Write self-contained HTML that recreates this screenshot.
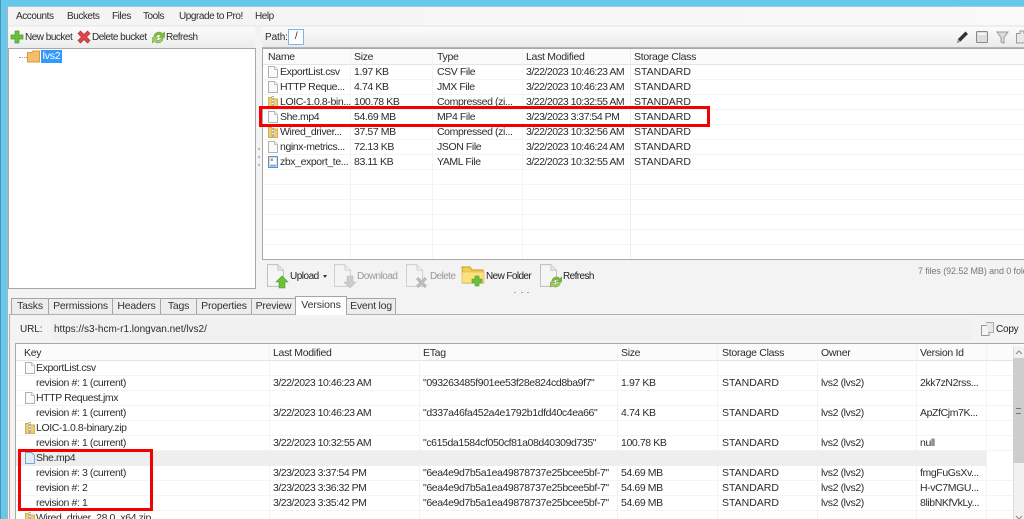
<!DOCTYPE html>
<html><head><meta charset="utf-8"><style>
html,body{margin:0;padding:0;background:#fff}
#p{position:relative;width:1024px;height:519px;overflow:hidden;background:#f3f3f3;font:10px "Liberation Sans",sans-serif;letter-spacing:-.5px;color:#2c2c2c;filter:blur(.3px)}
#p div,#p span,#p svg{position:absolute}
.t{white-space:nowrap;line-height:14px}
.b{background:#fff;border:1px solid #a8a8a8;box-sizing:border-box}
.r{left:0;right:0;height:15px;border-bottom:1px solid #f4f4f4;box-sizing:border-box;font-size:10.5px;letter-spacing:-.4px}
.r span{white-space:nowrap;line-height:15px;top:0}
.v{top:0;width:1px;background:#f3f3f3}
.a span:nth-child(1){left:17px}.a span:nth-child(2){left:91px}.a span:nth-child(3){left:174px}.a span:nth-child(4){left:263px;letter-spacing:-.5px}.a span:nth-child(5){left:371px;letter-spacing:0}
.a svg{left:5px;top:1px}
.k span:nth-child(1){left:20px}.k span:nth-child(2){left:257px;letter-spacing:-.5px}.k span:nth-child(3){left:407px}.k span:nth-child(4){left:605px}.k span:nth-child(5){left:706px;letter-spacing:0}.k span:nth-child(6){left:805px}.k span:nth-child(7){left:904px}
.k svg{left:9px;top:1px}
.h span{letter-spacing:-.3px!important}
.tab{top:298px;height:16px;background:#ededed;border:1px solid #a5a5a5;border-bottom:0;box-sizing:border-box;line-height:15px;text-align:center;color:#333;font-size:10.5px;letter-spacing:-.22px}
.red{border:3px solid #f40000;box-sizing:border-box}
.m{top:10px;letter-spacing:-.45px}
</style></head><body><div id="p">
<svg width="0" height="0" style="position:absolute"><defs>
<symbol id="f" viewBox="0 0 10 12"><path d="M.5.5H6.500L9.500 3.500V11.500H.5Z" fill="#fafafa" stroke="#b0b0b0"/><path d="M6.500.5V3.500H9.500" fill="#eee" stroke="#c4c4c4"/></symbol>
<symbol id="fb" viewBox="0 0 10 12"><path d="M.5.5H6.500L9.500 3.500V11.500H.5Z" fill="#e0ecf8" stroke="#7fa6cc"/></symbol>
<symbol id="z" viewBox="0 0 10 12"><path d="M.5 1.500H3.500L4.500 3H9.500V11.500H.5Z" fill="#f0cf72" stroke="#d0ae55"/><rect x="3.500" y="0" width="2.500" height="12" fill="#b8b090"/><rect x="4" y="1" width="1.500" height="1" fill="#fff"/><rect x="4" y="4" width="1.500" height="1" fill="#fff"/><rect x="4" y="7" width="1.500" height="1" fill="#fff"/></symbol>
<symbol id="y" viewBox="0 0 10 12"><path d="M.5.5H9.500V11.500H.5Z" fill="#cfe2f5" stroke="#5f8fc0"/><rect x="2" y="2" width="6" height="6" fill="#fff"/><rect x="2.500" y="2.500" width="2.500" height="2.500" fill="#e08a40"/><rect x="2" y="9" width="6" height="1.500" fill="#7fa8d0"/></symbol>
<symbol id="d" viewBox="0 0 18 24"><path d="M.5.5H11.500L17.500 6.500V23.500H.5Z" fill="#f5f5f5" stroke="#bdbdbd"/><path d="M11.500.5V6.500H17.500" fill="#e4e4e4" stroke="#c8c8c8"/></symbol>
<symbol id="gr" viewBox="0 0 16 16"><path d="M3 7A5.500 5.500 0 0 1 12.500 4L14.500 2V8H8.500L10.500 6A3 3 0 0 0 5.500 7Z" fill="#7dbb3c" stroke="#5a962a" stroke-width=".5"/><path d="M13 9A5.500 5.500 0 0 1 3.500 12L1.500 14V8H7.500L5.500 10A3 3 0 0 0 10.500 9Z" fill="#9ccf5c" stroke="#5a962a" stroke-width=".5"/></symbol>
</defs></svg>

<!-- window chrome -->
<div style="left:0;top:0;width:1024px;height:6px;background:#66c9ec"></div>
<div style="left:0;top:0;width:7px;height:519px;background:#66c9ec"></div>
<div style="left:0;top:0;width:1px;height:519px;background:#4a93b5"></div>
<div style="left:7px;top:6px;width:1017px;height:1px;background:#a9c7d6"></div>
<div style="left:7px;top:6px;width:1px;height:513px;background:#a8b4ba"></div>
<div style="left:8px;top:7px;width:1016px;height:18px;background:linear-gradient(90deg,#f3f3f3,#f9f9f9)"></div>
<div style="left:8px;top:25px;width:1016px;height:2px;background:#eee"></div>

<!-- menu -->
<span class="t m" style="left:16px">Accounts</span>
<span class="t m" style="left:67px">Buckets</span>
<span class="t m" style="left:112px">Files</span>
<span class="t m" style="left:143px">Tools</span>
<span class="t m" style="left:179px">Upgrade to Pro!</span>
<span class="t m" style="left:255px">Help</span>

<!-- left toolbar -->
<div style="left:9px;top:27px;width:246px;height:21px;background:linear-gradient(#fbfbfb,#ececec)"></div>
<svg style="left:10px;top:30px" width="14" height="14" viewBox="0 0 14 14"><path d="M5 1H9V5H13V9H9V13H5V9H1V5H5Z" fill="#6cbf3c" stroke="#4f9a2a" stroke-width=".7"/></svg>
<span class="t" style="left:25px;top:31px">New bucket</span>
<svg style="left:77px;top:30px" width="14" height="14" viewBox="0 0 14 14"><path d="M1 3.500L3.500 1L7 4.500L10.500 1L13 3.500L9.500 7L13 10.500L10.500 13L7 9.500L3.500 13L1 10.500L4.500 7Z" fill="#e0474c" stroke="#b52a30" stroke-width=".7"/></svg>
<span class="t" style="left:92px;top:31px">Delete bucket</span>
<svg style="left:151px;top:30px" width="15" height="15"><use href="#gr"/></svg>
<span class="t" style="left:166px;top:31px">Refresh</span>

<!-- tree -->
<div class="b" style="left:8px;top:48px;width:248px;height:241px"></div>
<div style="left:19px;top:57px;width:8px;height:0;border-top:1px dotted #999"></div>
<svg style="left:27px;top:50px" width="13" height="13" viewBox="0 0 13 13"><path d="M.5 2.500H5L6 1H12.500V12H.5Z" fill="#f6bd6a" stroke="#d99a45"/></svg>
<div style="left:41px;top:50px;width:21px;height:13px;background:#3399ff;color:#fff;line-height:13px;text-align:center;font-size:10.5px;letter-spacing:-.2px">lvs2</div>

<!-- splitter dots -->
<div style="left:258px;top:148px;width:2px;height:2px;background:#bbb"></div>
<div style="left:258px;top:156px;width:2px;height:2px;background:#bbb"></div>
<div style="left:258px;top:164px;width:2px;height:2px;background:#bbb"></div>

<!-- right toolbar -->
<div style="left:262px;top:27px;width:762px;height:21px;background:linear-gradient(#fbfbfb,#eaeaea)"></div>
<div style="left:262px;top:47px;width:762px;height:1px;background:#b5b5b5"></div>
<span class="t" style="left:265px;top:31px;letter-spacing:-.1px">Path:</span>
<div style="left:288px;top:29px;width:16px;height:16px;background:#fff;border:1px solid #7fb4e6;box-sizing:border-box;text-align:center;line-height:14px">/</div>
<svg style="left:956px;top:30px" width="13" height="14" viewBox="0 0 13 14"><path d="M1 13L2 9L9.500 1.500L12 4L4.500 11.500Z" fill="#333"/><path d="M1 13L2 9L4.500 11.500Z" fill="#999"/></svg>
<svg style="left:976px;top:31px" width="12" height="12" viewBox="0 0 12 12"><rect x=".5" y=".5" width="11" height="11" rx="1" fill="#ddd" stroke="#888"/><rect x="2" y="2" width="8" height="2" fill="#f5f5f5"/></svg>
<svg style="left:996px;top:31px" width="13" height="13" viewBox="0 0 13 13"><path d="M1 1H12L8 6.500V12L5 11V6.500Z" fill="#ddd" stroke="#999"/></svg>
<svg style="left:1016px;top:30px" width="12" height="14" viewBox="0 0 12 14"><path d="M.5 3.500H4V1H8V3.500H11.500V13H.5Z" fill="#e8e8e8" stroke="#999"/></svg>

<!-- file table -->
<div class="b" style="left:262px;top:48px;width:780px;height:212px;overflow:hidden">
  <div style="left:0;top:0;right:0;height:15px;background:#fbfbfb;border-bottom:1px solid #e4e4e4"></div>
  <div class="v" style="left:87px;height:210px"></div><div class="v" style="left:169px;height:210px"></div><div class="v" style="left:259px;height:210px"></div><div class="v" style="left:367px;height:210px;background:#ececec"></div>
  <div class="r a h" style="top:1px;border-bottom:0"><span style="left:5px">Name</span><span>Size</span><span>Type</span><span>Last Modified</span><span>Storage Class</span></div>
  <div class="r a" style="top:16px"><span>ExportList.csv</span><span>1.97 KB</span><span>CSV File</span><span>3/22/2023 10:46:23 AM</span><span>STANDARD</span><svg width="10" height="12"><use href="#f"/></svg></div>
  <div class="r a" style="top:31px"><span>HTTP Reque...</span><span>4.74 KB</span><span>JMX File</span><span>3/22/2023 10:46:23 AM</span><span>STANDARD</span><svg width="10" height="12"><use href="#f"/></svg></div>
  <div class="r a" style="top:46px"><span>LOIC-1.0.8-bin...</span><span>100.78 KB</span><span>Compressed (zi...</span><span>3/22/2023 10:32:55 AM</span><span>STANDARD</span><svg width="10" height="12"><use href="#z"/></svg></div>
  <div class="r a" style="top:61px"><span>She.mp4</span><span>54.69 MB</span><span>MP4 File</span><span>3/23/2023 3:37:54 PM</span><span>STANDARD</span><svg width="10" height="12"><use href="#f"/></svg></div>
  <div class="r a" style="top:76px"><span>Wired_driver...</span><span>37.57 MB</span><span>Compressed (zi...</span><span>3/22/2023 10:32:56 AM</span><span>STANDARD</span><svg width="10" height="12"><use href="#z"/></svg></div>
  <div class="r a" style="top:91px"><span>nginx-metrics...</span><span>72.13 KB</span><span>JSON File</span><span>3/22/2023 10:46:24 AM</span><span>STANDARD</span><svg width="10" height="12"><use href="#f"/></svg></div>
  <div class="r a" style="top:106px"><span>zbx_export_te...</span><span>83.11 KB</span><span>YAML File</span><span>3/22/2023 10:32:55 AM</span><span>STANDARD</span><svg width="10" height="12"><use href="#y"/></svg></div>
  <div class="r" style="top:121px"></div><div class="r" style="top:136px"></div><div class="r" style="top:151px"></div><div class="r" style="top:166px"></div><div class="r" style="top:181px"></div><div class="r" style="top:196px"></div>
</div>
<div class="red" style="left:259px;top:106px;width:451px;height:21px"></div>

<!-- file toolbar -->
<svg style="left:267px;top:264px" width="17" height="23"><use href="#d"/></svg>
<svg style="left:275px;top:275px" width="14" height="14" viewBox="0 0 14 14"><path d="M7 1L13 7H10V13H4V7H1Z" fill="#6cbf3c" stroke="#4f9a2a" stroke-width=".6"/></svg>
<span class="t" style="left:290px;top:270px;color:#222">Upload</span>
<span style="left:323px;top:275px;width:0;height:0;border:2.500px solid transparent;border-top:3px solid #333"></span>
<svg style="left:334px;top:264px;opacity:.7" width="17" height="23"><use href="#d"/></svg>
<svg style="left:343px;top:275px" width="14" height="14" viewBox="0 0 14 14"><path d="M4 1H10V7H13L7 13L1 7H4Z" fill="#ccc" stroke="#bbb" stroke-width=".6"/></svg>
<span class="t" style="left:357px;top:270px;color:#999">Download</span>
<svg style="left:406px;top:264px;opacity:.7" width="17" height="23"><use href="#d"/></svg>
<svg style="left:415px;top:276px" width="13" height="13" viewBox="0 0 14 14"><path d="M1 3.500L3.500 1L7 4.500L10.500 1L13 3.500L9.500 7L13 10.500L10.500 13L7 9.500L3.500 13L1 10.500L4.500 7Z" fill="#bbb"/></svg>
<span class="t" style="left:430px;top:270px;color:#999;letter-spacing:-.6px">Delete</span>
<svg style="left:461px;top:265px" width="24" height="22" viewBox="0 0 24 22"><path d="M1 2H9L11 5H22V18H2Z" fill="#f5cf4f" stroke="#c79a2a"/><path d="M1 7H23V18H1Z" fill="#fbe27f" stroke="#d9ac3a" stroke-width=".6"/><path d="M14 11H18V14H21V18H18V21H14V18H11V14H14Z" fill="#6cbf3c" stroke="#4f9a2a" stroke-width=".6"/></svg>
<span class="t" style="left:486px;top:270px;color:#222;letter-spacing:-.6px">New Folder</span>
<svg style="left:540px;top:264px" width="17" height="23"><use href="#d"/></svg>
<svg style="left:549px;top:275px" width="14" height="14"><use href="#gr"/></svg>
<span class="t" style="left:563px;top:270px;color:#222;letter-spacing:-.6px">Refresh</span>
<span class="t" style="left:918px;top:264px;color:#777;font-size:9px;letter-spacing:-.1px">7 files (92.52 MB) and 0 folders</span>
<div style="left:514px;top:292px;width:2px;height:1px;background:#aaa"></div>
<div style="left:521px;top:292px;width:2px;height:1px;background:#aaa"></div>
<div style="left:527px;top:292px;width:2px;height:1px;background:#aaa"></div>

<!-- tabs -->
<div style="left:9px;top:314px;width:1015px;height:1px;background:#b0b0b0"></div>
<div class="tab" style="left:11px;width:38px">Tasks</div>
<div class="tab" style="left:48px;width:65px">Permissions</div>
<div class="tab" style="left:112px;width:49px">Headers</div>
<div class="tab" style="left:160px;width:37px">Tags</div>
<div class="tab" style="left:196px;width:56px">Properties</div>
<div class="tab" style="left:251px;width:45px">Preview</div>
<div class="tab" style="left:295px;top:296px;width:52px;height:19px;background:#fff;line-height:16px;z-index:2;letter-spacing:-.1px">Versions</div>
<div class="tab" style="left:346px;width:50px">Event log</div>

<!-- URL row -->
<div style="left:9px;top:315px;width:1px;height:204px;background:#b0b0b0"></div>
<span class="t" style="left:20px;top:323px;letter-spacing:-.1px">URL:</span>
<div style="left:52px;top:319px;width:920px;height:21px;background:#f0f0f0"></div>
<span class="t" style="left:54px;top:323px;letter-spacing:0">https://s3-hcm-r1.longvan.net/lvs2/</span>
<svg style="left:981px;top:322px" width="13" height="14" viewBox="0 0 13 14"><path d="M.5 3.500H8V13.500H.5Z" fill="#f3f3f3" stroke="#999"/><path d="M5 .5H12.500V10.500H8" fill="#e8e8e8" stroke="#aaa"/></svg>
<span class="t" style="left:996px;top:323px;color:#222;letter-spacing:-.22px">Copy</span>

<!-- versions table -->
<div class="b" style="left:15px;top:343px;width:1020px;height:190px;overflow:hidden">
  <div style="left:0;top:0;right:0;height:16px;background:#fbfbfb;border-bottom:1px solid #e4e4e4"></div>
  <div class="v" style="left:253px;height:188px"></div><div class="v" style="left:403px;height:188px"></div><div class="v" style="left:601px;height:188px"></div><div class="v" style="left:701px;height:188px"></div><div class="v" style="left:801px;height:188px"></div><div class="v" style="left:900px;height:188px"></div><div class="v" style="left:970px;height:188px"></div>
  <div class="r k h" style="top:2px;border-bottom:0"><span style="left:8px">Key</span><span>Last Modified</span><span>ETag</span><span>Size</span><span>Storage Class</span><span>Owner</span><span>Version Id</span></div>
  <div class="r k" style="top:17px"><span>ExportList.csv</span><svg width="10" height="12"><use href="#f"/></svg></div>
  <div class="r k" style="top:32px"><span>revision #: 1 (current)</span><span>3/22/2023 10:46:23 AM</span><span>"093263485f901ee53f28e824cd8ba9f7"</span><span>1.97 KB</span><span>STANDARD</span><span>lvs2 (lvs2)</span><span>2kk7zN2rss...</span></div>
  <div class="r k" style="top:47px"><span>HTTP Request.jmx</span><svg width="10" height="12"><use href="#f"/></svg></div>
  <div class="r k" style="top:62px"><span>revision #: 1 (current)</span><span>3/22/2023 10:46:23 AM</span><span>"d337a46fa452a4e1792b1dfd40c4ea66"</span><span>4.74 KB</span><span>STANDARD</span><span>lvs2 (lvs2)</span><span>ApZfCjm7K...</span></div>
  <div class="r k" style="top:77px"><span>LOIC-1.0.8-binary.zip</span><svg width="10" height="12"><use href="#z"/></svg></div>
  <div class="r k" style="top:92px"><span>revision #: 1 (current)</span><span>3/22/2023 10:32:55 AM</span><span>"c615da1584cf050cf81a08d40309d735"</span><span>100.78 KB</span><span>STANDARD</span><span>lvs2 (lvs2)</span><span>null</span></div>
  <div class="r k" style="top:107px;right:48px;background:#eee;border-bottom:0"><span>She.mp4</span><svg width="10" height="12"><use href="#fb"/></svg></div>
  <div class="r k" style="top:122px"><span>revision #: 3 (current)</span><span>3/23/2023 3:37:54 PM</span><span>"6ea4e9d7b5a1ea49878737e25bcee5bf-7"</span><span>54.69 MB</span><span>STANDARD</span><span>lvs2 (lvs2)</span><span>fmgFuGsXv...</span></div>
  <div class="r k" style="top:137px"><span>revision #: 2</span><span>3/23/2023 3:36:32 PM</span><span>"6ea4e9d7b5a1ea49878737e25bcee5bf-7"</span><span>54.69 MB</span><span>STANDARD</span><span>lvs2 (lvs2)</span><span>H-vC7MGU...</span></div>
  <div class="r k" style="top:152px"><span>revision #: 1</span><span>3/23/2023 3:35:42 PM</span><span>"6ea4e9d7b5a1ea49878737e25bcee5bf-7"</span><span>54.69 MB</span><span>STANDARD</span><span>lvs2 (lvs2)</span><span>8libNKfVkLy...</span></div>
  <div class="r k" style="top:167px"><span>Wired_driver_28.0_x64.zip</span><svg width="10" height="12"><use href="#z"/></svg></div>
</div>
<div class="red" style="left:18px;top:449px;width:135px;height:62px"></div>

<!-- scrollbar -->
<div style="left:1013px;top:346px;width:11px;height:173px;background:#f1f1f1;border-left:1px solid #ddd;box-sizing:border-box"></div>
<div style="left:1013px;top:358px;width:11px;height:105px;background:#cdcdcd"></div>
<div style="left:1016px;top:408px;width:5px;height:4px;border-top:1px solid #777;border-bottom:1px solid #777"></div>
<svg style="left:1015px;top:350px" width="8" height="5" viewBox="0 0 8 5"><path d="M1 4L4 1L7 4" fill="none" stroke="#888"/></svg>
<svg style="left:1015px;top:515px" width="8" height="5" viewBox="0 0 8 5"><path d="M1 1L4 4L7 1" fill="none" stroke="#888"/></svg>
</div></body></html>
